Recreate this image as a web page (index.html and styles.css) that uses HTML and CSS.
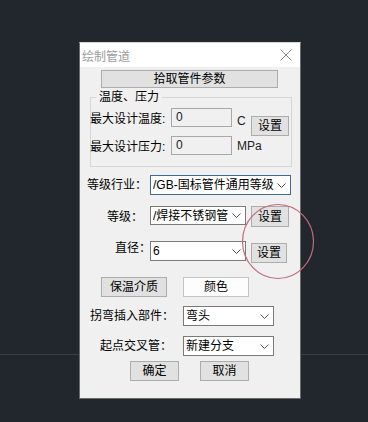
FILE: index.html
```html
<!DOCTYPE html>
<html>
<head>
  <meta charset="UTF-8">
  <title>绘制管道</title>
  <link rel="stylesheet" href="styles.css">
</head>
<body>
  <div class="dialog">
    <div class="titlebar">
      <span class="title">绘制管道</span>
      <svg class="close" width="12" height="12" viewBox="0 0 12 12">
        <path d="M0.5 0.5L11.5 11.5M11.5 0.5L0.5 11.5" stroke="#8c8c8c" stroke-width="1" fill="none"/>
      </svg>
    </div>
    <div class="content">
      <button class="btn pick">拾取管件参数</button>

      <fieldset class="group">
        <legend>温度、压力</legend>
        <div class="group-grid">
          <span class="label">最大设计温度:</span>
          <div class="field">0</div>
          <span class="unit unit-c">C</span>
          <button class="btn set-temp">设置</button>
          <span class="label">最大设计压力:</span>
          <div class="field">0</div>
          <span class="unit">MPa</span>
        </div>
      </fieldset>

      <div class="row row-industry">
        <span class="label">等级行业：</span>
        <div class="combo combo-wide combo-focus">
          <span class="combo-text">/GB-国标管件通用等级</span>
          <svg class="chev" width="9" height="5" viewBox="0 0 9 5"><path d="M0.5 0.5L4.5 4.5L8.5 0.5" stroke="#555" fill="none"/></svg>
        </div>
      </div>

      <div class="row row-grade">
        <span class="label">等级：</span>
        <div class="combo combo-mid">
          <span class="combo-text">/焊接不锈钢管</span>
          <svg class="chev" width="9" height="5" viewBox="0 0 9 5"><path d="M0.5 0.5L4.5 4.5L8.5 0.5" stroke="#555" fill="none"/></svg>
        </div>
        <button class="btn set set-grade">设置</button>
      </div>

      <div class="row row-dia">
        <span class="label">直径：</span>
        <div class="combo combo-mid">
          <span class="combo-text">6</span>
          <svg class="chev" width="9" height="5" viewBox="0 0 9 5"><path d="M0.5 0.5L4.5 4.5L8.5 0.5" stroke="#555" fill="none"/></svg>
        </div>
        <button class="btn set set-dia">设置</button>
      </div>

      <div class="row row-media">
        <button class="btn media">保温介质</button>
        <button class="btn btn-white media">颜色</button>
      </div>

      <div class="row row-bend">
        <span class="label">拐弯插入部件：</span>
        <div class="combo combo-short">
          <span class="combo-text">弯头</span>
          <svg class="chev" width="9" height="5" viewBox="0 0 9 5"><path d="M0.5 0.5L4.5 4.5L8.5 0.5" stroke="#555" fill="none"/></svg>
        </div>
      </div>

      <div class="row row-cross">
        <span class="label">起点交叉管：</span>
        <div class="combo combo-short">
          <span class="combo-text">新建分支</span>
          <svg class="chev" width="9" height="5" viewBox="0 0 9 5"><path d="M0.5 0.5L4.5 4.5L8.5 0.5" stroke="#555" fill="none"/></svg>
        </div>
      </div>

      <div class="row row-ok">
        <button class="btn action">确定</button>
        <button class="btn action">取消</button>
      </div>
    </div>
  </div>

  <svg class="mark" width="74" height="77" viewBox="0 0 74 77">
    <ellipse cx="37" cy="38.5" rx="35.5" ry="37" stroke="#c46a78" stroke-width="1.2" fill="none"/>
  </svg>
</body>
</html>
```

FILE: styles.css
```css
body {
  margin: 0;
  height: 422px;
  background: linear-gradient(to bottom, transparent 354px, #3a3f47 354px, #3a3f47 355px, transparent 355px), #22272e;
  font-family: "Liberation Sans", "Noto Sans CJK SC", sans-serif;
  font-size: 12px;
  color: #000;
  overflow: hidden;
}
.dialog {
  margin: 42px 0 0 79px;
  width: 222px;
  height: 357px;
  box-sizing: border-box;
  border: 1px solid #6a6a6a;
  border-top-color: #d8d8d8;
  background: #f0f0f0;
  display: flex;
  flex-direction: column;
}
.titlebar {
  height: 24px;
  background: #fff;
  display: flex;
  align-items: center;
  justify-content: space-between;
  padding: 0 8px 0 2px;
}
.title {
  color: #9c9c9c;
  font-size: 12px;
}
.content {
  display: flex;
  flex-direction: column;
  align-items: flex-start;
}
.btn {
  font-family: inherit;
  font-size: 12px;
  color: #000;
  background: #e1e1e1;
  border: 1px solid #adadad;
  padding: 0;
  margin: 0;
  height: 20px;
  box-sizing: border-box;
  line-height: 16px;
}
.btn-white {
  background: #fdfdfd;
  border-color: #c4c4c4;
}
.pick {
  margin: 3px 0 0 21px;
  width: 177px;
  height: 18px;
}
.group {
  margin: 1px 0 0 10px;
  padding: 3px 0 11px 0;
  width: 202px;
  box-sizing: border-box;
  border: 1px solid #d6d6d6;
}
.group legend {
  margin-left: 5px;
  padding: 0 3px;
  line-height: 16px;
}
.group-grid {
  display: grid;
  grid-template-columns: 80px 61px 19px 38px;
  grid-template-rows: 19px 19px;
  row-gap: 9px;
  align-items: center;
}
.label {
  white-space: nowrap;
}
.group-grid .label {
  margin-left: -1px;
}
.field {
  height: 19px;
  box-sizing: border-box;
  border: 1px solid #a8a8a8;
  background: #f0f0f0;
  padding: 0 4px;
  line-height: 17px;
  color: #222;
}
.unit {
  padding-left: 5px;
  color: #222;
}
.unit-c {
  padding-top: 6px;
}
.set-temp {
  grid-column: 4;
  grid-row: 1 / span 2;
  align-self: start;
  margin-top: 8px;
  width: 38px;
  height: 20px;
}
.row {
  display: flex;
  align-items: flex-start;
}
.row .label {
  line-height: 20px;
}
.combo {
  display: flex;
  align-items: center;
  height: 20px;
  box-sizing: border-box;
  border: 1px solid #7a7a7a;
  background: #fff;
  padding: 0 4px 0 2px;
}
.combo-focus {
  border-color: #3c6a95;
}
.combo-text {
  flex: 1;
  white-space: nowrap;
  overflow: hidden;
  line-height: 18px;
}
.chev {
  margin-left: 2px;
  flex: none;
}
.combo-wide {
  width: 141px;
}
.combo-mid {
  width: 96px;
  height: 19px;
}
.combo-short {
  width: 91px;
}
.set {
  margin-left: 5px;
}
.row-industry {
  margin-top: 8px;
  padding-left: 7px;
}
.row-industry .label {
  width: 63px;
}
.row-grade {
  margin-top: 11px;
  padding-left: 27px;
}
.row-grade .label {
  width: 43px;
  margin-top: 1px;
}
.set-grade {
  width: 38px;
  height: 21px;
}
.row-dia {
  margin-top: 14px;
  padding-left: 35px;
}
.row-dia .label {
  width: 35px;
  margin-top: -3px;
}
.row-dia .combo-mid {
  height: 20px;
}
.set-dia {
  width: 36px;
  margin-top: 2px;
}
.row-media {
  margin-top: 14px;
  padding-left: 21px;
  gap: 16px;
}
.media {
  width: 66px;
}
.row-bend {
  margin-top: 9px;
  padding-left: 10px;
}
.row-bend .label {
  width: 93px;
}
.row-cross {
  margin-top: 10px;
  padding-left: 20px;
}
.row-cross .label {
  width: 83px;
}
.row-ok {
  margin-top: 5px;
  padding-left: 50px;
  gap: 21px;
}
.action {
  width: 49px;
}
.mark {
  position: absolute;
  left: 241px;
  top: 203px;
}
```
